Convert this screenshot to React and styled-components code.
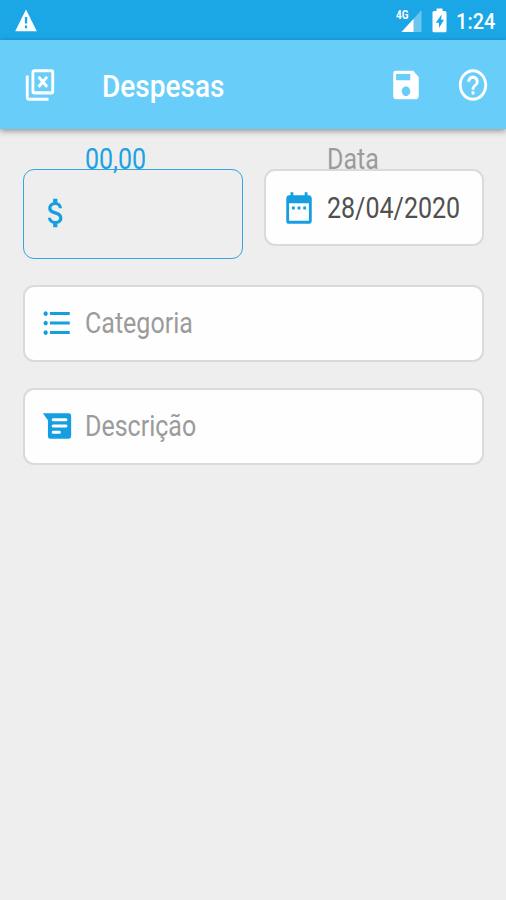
import React from 'react';
import styled, { createGlobalStyle } from 'styled-components';
import { MdAttachMoney, MdDateRange, MdFormatListBulleted, MdHelpOutline, MdSave } from 'react-icons/md';

const GlobalStyle = createGlobalStyle`
    * {
        box-sizing: border-box;
    }
    body {
        margin: 0;
        background-color: #eeeeee;
        font-family: Roboto, 'Liberation Sans', sans-serif;
    }
    svg {
        display: block;
        flex-shrink: 0;
        overflow: visible;
    }
`;

const Screen = styled.div`
    display: flex;
    flex-direction: column;
    width: 506px;
    height: 900px;
    overflow: hidden;
    background-color: #eeeeee;
`;

const StatusBar = styled.div`
    display: flex;
    justify-content: space-between;
    height: 40px;
    padding: 8px 11px 0 15px;
    background-color: #1ba7e6;
    color: #fff;
`;

const StatusIcons = styled.div`
    display: flex;
    align-items: flex-start;
`;

const Text = styled.span`
    display: block;
    font-size: ${(props) => props.$size || 28.6}px;
    font-weight: ${(props) => props.$weight || 400};
    line-height: ${(props) => props.$line || 34}px;
    color: ${(props) => props.$color || '#9b9b9b'};
    white-space: nowrap;
    transform: scaleX(${(props) => props.$scale || 0.875});
    transform-origin: ${(props) => props.$origin || 'left'} center;
`;

const Clock = styled(Text)`
    width: 44px;
    margin-left: 3px;
`;

const Icon = styled.span`
    flex-shrink: 0;
    width: 34px;
    height: 38px;

    svg {
        width: 34px;
        height: 38px;
    }
`;

const Header = styled.header`
    display: flex;
    align-items: center;
    height: 89px;
    padding: 0 16px 0 23px;
    background-color: #69cdfa;
    color: #fff;
    box-shadow: 0 2px 6px rgba(0, 0, 0, 0.4);
`;

const Title = styled.h1`
    flex: 1;
    margin: 4px 0 0 45px;
`;

const HeaderActions = styled.div`
    display: flex;
    align-items: center;
    gap: 33.5px;
`;

const Form = styled.main`
    display: flex;
    flex-direction: column;
    gap: 26px;
    padding: 13px 22px 0 23px;
`;

const Row = styled.div`
    display: flex;
    align-items: flex-start;
    gap: 21px;
`;

const Group = styled.div`
    display: flex;
    flex: 1;
    flex-direction: column;
`;

const Label = styled.div`
    height: 27px;
    padding-left: ${(props) => props.$indent || 62}px;
`;

const Field = styled.div`
    display: flex;
    align-items: center;
    gap: 11px;
    height: ${(props) => (props.$active ? 90 : 77)}px;
    padding: ${(props) => props.$padding || '0 0 1px 15px'};
    border: ${(props) => (props.$active ? '1px solid #35a6df' : '2px solid #dadada')};
    border-radius: 11px;
    background-color: ${(props) => (props.$active ? 'transparent' : '#fefefe')};
    color: #169fe0;
`;

const stretch = { preserveAspectRatio: 'none' };

const WarningIcon = () => (
    <svg width='22' height='24' viewBox='0 0 22 24'>
        <path
            fill='currentColor'
            fillRule='evenodd'
            d='M11 1.5 21.8 23.3H0.2ZM9.9 9v6.5h2.3V9ZM9.9 17.5v2.7h2.3v-2.7Z'
        />
    </svg>
);

const SignalIcon = () => (
    <svg width='28' height='26' viewBox='0 0 28 26'>
        <path fill='currentColor' opacity='0.35' d='M25.5 2v22H5.5Z' />
        <path fill='currentColor' d='M17.5 11v13H5.5Z' />
        <text
            x='0'
            y='11.2'
            fill='currentColor'
            stroke='#1ba7e6'
            strokeWidth='1'
            paintOrder='stroke'
            fontSize='12.5'
            fontWeight='700'
            textLength='12.5'
            lengthAdjust='spacingAndGlyphs'
        >
            4G
        </text>
    </svg>
);

const BatteryIcon = () => (
    <svg width='16' height='26' viewBox='0 0 16 26'>
        <path
            fill='currentColor'
            fillRule='evenodd'
            d='M4.5 0.5h6V3H13q1.5 0 1.5 1.5V23q0 1.2-1.2 1.2H1.8Q0.5 24.2 0.5 23V4.5Q0.5 3 2 3h2.5ZM9.6 6.5 3.8 14.8h3.2V20l5-8.3H9.2Z'
        />
    </svg>
);

const CloseBoxesIcon = () => (
    <svg {...stretch} viewBox='0 0 24 24' fill='none' stroke='currentColor' strokeWidth='2'>
        <rect x='7' y='3' width='14' height='14' rx='1' />
        <path d='M3 6v13.8q0 1.2 1.2 1.2H18' />
        <path d='m11 6.8 6 6.4m0-6.4-6 6.4' />
    </svg>
);

const MessageIcon = () => (
    <svg {...stretch} viewBox='0 0 24 24'>
        <path
            fill='currentColor'
            d='M2 4h18.2Q22 4 22 5.8v12.4Q22 20 20.2 20H7.2Q5.6 20 5.6 18.2V8.4Z'
        />
        <path
            stroke='#fefefe'
            strokeWidth='1.9'
            strokeLinecap='round'
            d='M9.2 8h9.2M9.2 12h9.2M9.2 16h4.6'
        />
    </svg>
);

const wideFields = [
    { text: 'Categoria', icon: <MdFormatListBulleted {...stretch} /> },
    { text: 'Descrição', icon: <MessageIcon /> },
];

const Spacer = styled.span`
    width: 8px;
`;

const App = () => {
    return (
        <Screen>
            <GlobalStyle />
            <StatusBar>
                <WarningIcon />
                <StatusIcons>
                    <SignalIcon />
                    <Spacer />
                    <BatteryIcon />
                    <Clock $size={22.5} $weight={500} $line={27} $color='#fff' $origin='right' $scale={0.885}>
                        1:24
                    </Clock>
                </StatusIcons>
            </StatusBar>
            <Header>
                <Icon>
                    <CloseBoxesIcon />
                </Icon>
                <Title>
                    <Text $size={31.5} $weight={500} $line={36} $color='#fff' $scale={0.89}>
                        Despesas
                    </Text>
                </Title>
                <HeaderActions>
                    <Icon>
                        <MdSave {...stretch} />
                    </Icon>
                    <Icon>
                        <MdHelpOutline {...stretch} />
                    </Icon>
                </HeaderActions>
            </Header>
            <Form>
                <Row>
                    <Group>
                        <Label>
                            <Text $color='#1ba2e2'>00,00</Text>
                        </Label>
                        <Field $active $padding='0 0 2px 15px'>
                            <Icon>
                                <MdAttachMoney {...stretch} />
                            </Icon>
                        </Field>
                    </Group>
                    <Group>
                        <Label $indent={63}>
                            <Text>Data</Text>
                        </Label>
                        <Field $padding='1px 0 0 16px'>
                            <Icon>
                                <MdDateRange {...stretch} />
                            </Icon>
                            <Text $color='#505050'>28/04/2020</Text>
                        </Field>
                    </Group>
                </Row>
                {wideFields.map((field) => (
                    <Field key={field.text}>
                        <Icon>{field.icon}</Icon>
                        <Text>{field.text}</Text>
                    </Field>
                ))}
            </Form>
        </Screen>
    );
};

export default App;
